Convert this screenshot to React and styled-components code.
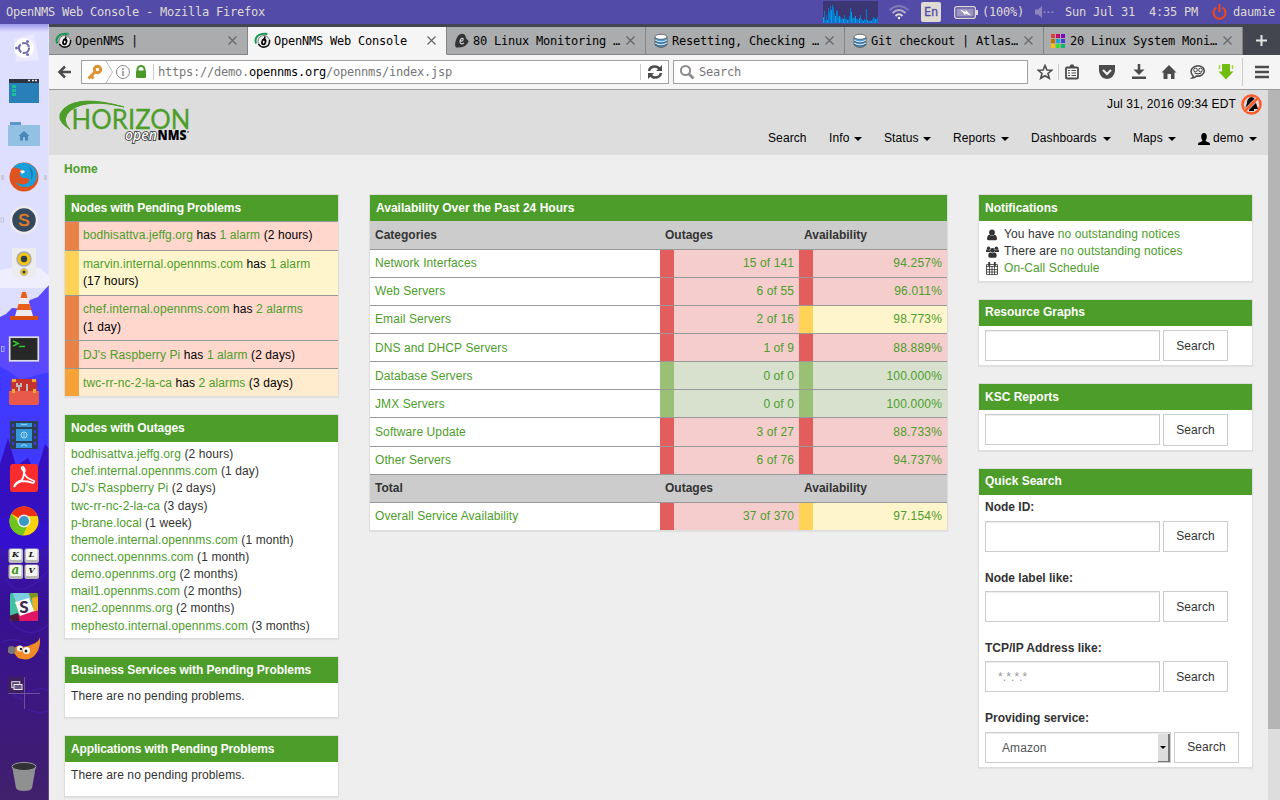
import React from "react";
import styled, { createGlobalStyle, css } from "styled-components";

const GREEN = "#4c9d29";
const RED = ["#e35d5c", "#f5cdcd"];
const YELLOW = ["#ffd357", "#fff5cd"];
const OK = ["#99c074", "#d7e1cd"];
const MINOR = ["#ea8147", "#ffd7cd"];
const WARN = ["#f5a338", "#ffebcd"];

const Global = createGlobalStyle`
  * { box-sizing: border-box; }
  body { margin: 0; overflow: hidden; }
  svg { display: block; flex: none; }
`;

const mono = css`
  font-family: "DejaVu Sans Mono", monospace;
  font-size: 12px;
  letter-spacing: -0.224px;
  white-space: pre;
`;

const Desktop = styled.div`
  width: 1280px;
  height: 800px;
  display: flex;
  flex-direction: column;
  overflow: hidden;
  background: #eee;
`;
const Panel = styled.div`
  ${mono}
  height: 24px;
  flex: none;
  display: flex;
  align-items: center;
  background: #534ba8;
  color: #dfdbd2;
  padding: 0 0 0 6px;
`;
const PanelTitle = styled.div`
  width: 817px;
`;
const PanelItem = styled.div`
  width: ${(p) => p.$w}px;
  flex: none;
`;
const LangBox = styled.div`
  ${mono}
  width: 20px;
  height: 20px;
  margin-right: 13px;
  border-radius: 2px;
  background: #dfdbd2;
  color: #534ba8;
  line-height: 21px;
  text-align: center;
  -webkit-text-stroke: 0.3px #534ba8;
`;
const Body = styled.div`
  display: flex;
  flex: 1;
  min-height: 0;
`;

/* Launcher */
const Launcher = styled.div`
  width: 49px;
  flex: none;
  position: relative;
  display: flex;
  flex-direction: column;
  align-items: flex-start;
  padding-top: 2px;
  background: #dedeff;
`;
const Wallpaper = styled.svg`
  position: absolute;
  left: 0;
  top: 0;
`;
const Slot = styled.div`
  position: relative;
  width: 48px;
  height: 43.03px;
  margin-top: ${(p) => p.$gap || 0}px;
  display: flex;
  align-items: center;
  justify-content: center;
`;

/* Browser chrome */
const Browser = styled.div`
  flex: 1;
  display: flex;
  flex-direction: column;
  min-width: 0;
`;
const TabStrip = styled.div`
  height: 31px;
  flex: none;
  display: flex;
  padding-top: 3px;
  background: #44464f;
`;
const Tab = styled.div`
  ${mono}
  width: 199px;
  height: 28px;
  display: flex;
  align-items: center;
  padding: 0 10px 0 6px;
  color: #000;
  background: ${(p) => (p.$active ? "#f5f5f5" : "#abacae")};
  border-right: 1px solid #838486;
  border-bottom: 1px solid ${(p) => (p.$active ? "#f5f5f5" : "#838486")};
`;
const TabLabel = styled.div`
  flex: 1;
  padding-left: 3px;
`;
const NewTab = styled.div`
  width: 37px;
  display: flex;
  align-items: center;
  justify-content: center;
  padding-bottom: 2px;
`;
const Toolbar = styled.div`
  ${mono}
  height: 35px;
  flex: none;
  display: flex;
  align-items: center;
  background: #f5f5f5;
  border-bottom: 1px solid #9b9b9b;
  padding-left: 8px;
`;
const Field = styled.div`
  width: ${(p) => p.$w}px;
  height: 24px;
  margin-left: ${(p) => p.$gap}px;
  display: flex;
  align-items: center;
  background: #fff;
  border: 1px solid #a0a0a0;
  color: #777;
  b { font-weight: normal; color: #000; }
`;
const FieldText = styled.span`
  flex: 1;
  padding-left: ${(p) => p.$pad}px;
`;
const Divider = styled.i`
  width: 1px;
  height: ${(p) => p.$h}px;
  background: #ccc;
  margin-left: ${(p) => p.$gap || 0}px;
`;
const Tool = styled.span`
  margin-left: ${(p) => p.$gap}px;
`;

/* Web page */
const Viewport = styled.div`
  flex: 1;
  min-height: 0;
  display: flex;
`;
const Page = styled.div`
  flex: 1;
  background: #eee;
  color: #333;
  font: 12px/17.14px "Liberation Sans", Arial, sans-serif;
  letter-spacing: 0.1px;
  overflow: hidden;
`;
const Scrollbar = styled.div`
  width: 12px;
  background: #ddd;
`;
const Thumb = styled.div`
  height: 639px;
  background: #b5b5b5;
`;
const Header = styled.header`
  height: 65px;
  display: flex;
  justify-content: space-between;
  background: #ddd;
  color: #000;
  padding: 3px 6px 0 8px;
`;
const HeaderRight = styled.div`
  display: flex;
  flex-direction: column;
  align-items: flex-end;
`;
const Clock = styled.div`
  display: flex;
  align-items: center;
  gap: 5px;
  height: 23px;
  letter-spacing: 0.13px;
`;
const Nav = styled.nav`
  display: flex;
  gap: 22px;
  margin: 14px 5px 0 0;
`;
const NavItem = styled.div`
  width: ${(p) => p.$w}px;
  display: flex;
  align-items: center;
  justify-content: space-between;
  white-space: nowrap;
`;
const UserLabel = styled.span`
  display: flex;
  align-items: center;
  gap: 3px;
`;
const Caret = styled.i`
  border: 4px solid transparent;
  border-top-color: #000;
  border-bottom: 0;
`;
const Crumb = styled.div`
  height: 39px;
  padding: 6px 0 0 15px;
  font-weight: bold;
  color: ${GREEN};
`;
const Columns = styled.main`
  display: flex;
  gap: 30px;
  padding-left: 15px;
`;
const Column = styled.section`
  width: ${(p) => p.$w}px;
  flex: none;
`;
const Box = styled.div`
  height: ${(p) => p.$h}px;
  margin-bottom: 17px;
  background: #fff;
  border: 1px solid #ddd;
  box-shadow: 0 1px 1px rgba(0, 0, 0, 0.05);
`;
const BoxTitle = styled.h3`
  margin: 0;
  height: ${(p) => p.$h || 26}px;
  padding: 0 6px;
  font-size: 12px;
  line-height: ${(p) => p.$line || 26}px;
  letter-spacing: ${(p) => p.$track || 0}px;
  color: #fff;
  background: ${GREEN};
`;
const BoxBody = styled.div`
  padding: ${(p) => p.$top ?? 5}px 6px 0;
`;
const Link = styled.a`
  color: ${GREEN};
`;
const Age = styled.span`
  white-space: nowrap;
`;
const AlarmRow = styled.div`
  height: ${(p) => p.$h}px;
  border-top: 1px solid #999;
  background: linear-gradient(to right, ${(p) => p.$tone[0]} 14px, ${(p) => p.$tone[1]} 14px);
  color: #000;
  padding: ${(p) => p.$top || 5}px 20px 0 18px;
`;
const GridRow = styled.div`
  display: grid;
  grid-template-columns: 290px 139px 148px;
  grid-template-rows: 100%;
  height: ${(p) => p.$h || 28}px;
  line-height: 27px;
  ${(p) => (p.$head ? "background: #ccc; font-weight: bold; letter-spacing: 0;" : "")}
  border-top: ${(p) => (p.$first ? 0 : 1)}px solid #999;
`;
const Cell = styled.div`
  padding: ${(p) => p.$drop || 0}px 5px 0;
  white-space: nowrap;
`;
const ToneCell = styled(Cell)`
  text-align: right;
  color: ${GREEN};
  letter-spacing: ${(p) => p.$track}px;
  background: linear-gradient(to right, ${(p) => p.$tone[0]} 14px, ${(p) => p.$tone[1]} 14px);
`;
const Notice = styled.div`
  display: flex;
  align-items: center;
  height: 17.14px;
`;
const NoticeIcon = styled.span`
  width: 19px;
  padding-left: 1px;
`;
const FormRow = styled.div`
  display: flex;
  gap: 3px;
`;
const Label = styled.label`
  display: block;
  height: ${(p) => p.$h || 26}px;
  padding-top: 4px;
  margin-top: ${(p) => p.$gap || 0}px;
  font-weight: bold;
  letter-spacing: 0;
`;
const Input = styled.div`
  width: 175px;
  height: 31px;
  padding-left: 12px;
  line-height: 31px;
  border: 1px solid #ccc;
  box-shadow: inset 0 1px 1px rgba(0, 0, 0, 0.075);
  color: #999;
`;
const Select = styled(Input)`
  width: 186px;
  display: flex;
  justify-content: space-between;
  padding: 1px 0 0 16px;
  line-height: 29px;
  color: #555;
`;
const SelectButton = styled.span`
  width: 12px;
  display: flex;
  align-items: center;
  justify-content: center;
  background: #ddd;
  border-right: 2px solid #777;
  border-bottom: 1px solid #777;
`;
const SelectCaret = styled.i`
  border: 3px solid transparent;
  border-top-color: #000;
  border-bottom: 0;
`;
const Button = styled.div`
  width: 65px;
  height: ${(p) => p.$h || 31}px;
  line-height: ${(p) => p.$line || 30}px;
  text-align: center;
  border: 1px solid #ccc;
  color: #333;
`;

/* Drawings */
const OpenNmsIcon = () => (
  <svg width="17" height="17" viewBox="0 0 17 17">
    <circle cx="9.800" cy="9.300" r="5.800" fill="#eee" stroke="#777" strokeWidth="1" />
    <path d="M15.600 8Q16 15 9.500 15.300Q6 15 4.500 12" fill="none" stroke="#111" strokeWidth="1.500" />
    <ellipse cx="9.800" cy="9.800" rx="1.700" ry="2.600" fill="#fff" stroke="#000" strokeWidth="1.700" transform="rotate(15 9.800 9.800)" />
    <path d="M11 4.500L10 9" stroke="#000" strokeWidth="1.500" />
    <path d="M2.200 11.500Q0 6.500 4.500 3.200Q8.500 1 13.500 2" fill="none" stroke="#12994f" strokeWidth="1.900" />
  </svg>
);
const EIcon = () => (
  <svg width="17" height="16" viewBox="0 0 17 16">
    <path d="M8 1Q12 0 13 5L15.500 8Q15.500 10 12 13Q8 15 3 14.500Q1 12 3 7Q5 1 8 1Z" fill="#333" />
    <path d="M6.500 8.500Q11 8 10 5.500Q7.500 4.500 7 9Q7.500 12 11 10" fill="none" stroke="#ccc" strokeWidth="1.200" />
  </svg>
);
const DbIcon = () => (
  <svg width="17" height="16" viewBox="-1 0 17 16">
    <path d="M2 4V12Q8 17 14 12V4Z" fill="#4a9fd8" stroke="#555" strokeWidth=".8" />
    <path d="M2 7Q8 11 14 7M2 10Q8 14 14 10" fill="none" stroke="#e8f3fa" strokeWidth="1" />
    <path d="M2 8Q8 12 14 8M2 11Q8 15 14 11" fill="none" stroke="#444" strokeWidth=".7" />
    <ellipse cx="8" cy="3.800" rx="6" ry="2.500" fill="#fff" stroke="#555" strokeWidth=".8" />
  </svg>
);
const MosaicIcon = () => {
  const c = ["#e0403a", "#c00b70", "#7a0bc0", "#c87000", "#1ba4d8", "#4040e0", "#ffc000", "#3ddc3d", "#0bb86a"];
  return (
    <svg width="17" height="16" viewBox="0 0 17 16">
      {c.map((f, i) => <rect key={f} x={1 + (i % 3) * 5} y={1 + Math.floor(i / 3) * 5} width="4" height="4" fill={f} />)}
    </svg>
  );
};
const CloseIcon = () => (
  <svg width="9" height="9" viewBox="0 0 9 9"><path d="M.5.5L8.500 8.500M8.500.5L.5 8.500" stroke="#666" strokeWidth="1.200" /></svg>
);

const graphBars = [6, 12, 3, 8, 3, 15, 11, 17, 13, 18, 16, 10, 7, 13, 12, 6, 7, 6, 4, 5, 4, 8, 5, 4, 3, 3, 7, 15, 11, 5, 6, 5, 7, 4, 4, 3, 5, 8, 4, 3, 2, 4, 3, 14, 3, 2, 2, 3, 2, 4, 6, 5, 4, 4, 6];

const SystemPanel = () => (
  <Panel>
    <PanelTitle>OpenNMS Web Console - Mozilla Firefox</PanelTitle>
    <PanelItem $w={65}>
      <svg width="55" height="22" viewBox="0 0 55 22">
        <rect width="55" height="22" fill="#3c3674" />
        {graphBars.map((h, i) => <rect key={i} x={i} y={22 - h} width="1" height={h} fill={i % 4 ? "#0878c8" : "#0b9cf0"} />)}
      </svg>
    </PanelItem>
    <PanelItem $w={33}>
      <svg width="22" height="16" viewBox="0 0 22 16" fill="none" strokeWidth="2">
        <path d="M1.500 6Q11-2 20.500 6" stroke="#7f79b9" />
        <path d="M4.500 9Q11 3 17.500 9" stroke="#b3afc8" />
        <path d="M7.500 12Q11 8.500 14.500 12" stroke="#dfdbd2" />
        <circle cx="11" cy="14" r="1.200" fill="#fff" stroke="none" />
      </svg>
    </PanelItem>
    <LangBox>En</LangBox>
    <PanelItem $w={28}>
      <svg width="24" height="13" viewBox="0 0 24 13">
        <rect x=".7" y=".7" width="20.600" height="11.600" rx="2" fill="none" stroke="#dfdbd2" strokeWidth="1.300" />
        <rect x="2.500" y="2.500" width="17" height="8" fill="#9b95bd" />
        <rect x="22" y="4" width="2" height="5" fill="#dfdbd2" />
        <path d="M6 3.500L12 6L11.500 3.500L17 9.500L11 7.500L11.500 9.500Z" fill="#fff" />
      </svg>
    </PanelItem>
    <PanelItem $w={53}>(100%)</PanelItem>
    <PanelItem $w={30}>
      <svg width="19" height="12" viewBox="0 0 19 12" fill="#8d87bd">
        <path d="M0 3.500H3L7 0V12L3 8.500H0Z" /><path d="M8.500 5.500h2v1.500h-2zM12.500 5.500h2v1.500h-2zM16.500 5.500h2v1.500h-2z" />
      </svg>
    </PanelItem>
    <PanelItem $w={147}>Sun Jul 31  4:35 PM</PanelItem>
    <PanelItem $w={21}>
      <svg width="15" height="16" viewBox="0 0 15 16" fill="none" stroke="#f0471c" strokeWidth="2">
        <path d="M4.500 3.500A6 6 0 1 0 10.500 3.500" /><path d="M7.500 0V8" />
      </svg>
    </PanelItem>
    <span>daumie</span>
  </Panel>
);

const I = ({ w = 32, h = 32, children }) => <svg width={w} height={h} viewBox={`0 0 ${w} ${h}`}>{children}</svg>;

const LauncherBar = () => (
  <Launcher>
    <Wallpaper width="49" height="776" viewBox="0 0 49 776">
      <defs>
        <linearGradient id="night" x1="0" y1="0" x2="0" y2="1">
          <stop offset="0" stopColor="#3a16bd" /><stop offset=".3" stopColor="#371093" /><stop offset="1" stopColor="#41206c" />
        </linearGradient>
        <linearGradient id="shade" x1="0" y1="0" x2="0" y2="1">
          <stop offset="0" stopColor="#9c98ec" /><stop offset="1" stopColor="#dedeff" />
        </linearGradient>
      </defs>
      <rect width="49" height="8" fill="url(#shade)" />
      <path d="M0 246Q20 241 40 244L49 252V264H0Z" fill="#f5f5ff" opacity=".7" />
      <path d="M49 261L38 273L30 276L24 285L12 284L6 290L0 293V380H49Z" fill="#5a49ff" />
      <path d="M0 343Q12 348 20 356L49 348V520H0Z" fill="#4039ff" />
      <path d="M0 440L8 414L16 442L28 434L36 450L45 420L49 425V776H0Z" fill="#3510c0" />
      <path d="M0 500Q20 510 49 520V776H0Z" fill="url(#night)" />
      <path d="M0 523Q28 538 49 520V500L0 492Z" fill="#3410ce" />
      <path d="M6 555Q20 580 49 545M10 598Q30 618 49 600M2 618Q20 610 44 630M27 668l15-4 7 3M14 672l7-5v8zM28 686l12 3 9-2" fill="none" stroke="#4522b8" strokeWidth="1.500" opacity=".5" />
      <path d="M48.500 0V776" stroke="#fff" opacity=".2" />
    </Wallpaper>
    <Slot>
      <I>
        <path d="M6 7L26 2L31 28L8 30Z" fill="#eae9ff" /><circle cx="16" cy="16" r="10" fill="#fff" />
        <circle cx="16" cy="16" r="5" fill="none" stroke="#716dab" strokeWidth="2.200" strokeDasharray="9 1.470" />
        <circle cx="8.500" cy="16" r="1.500" fill="#716dab" /><circle cx="19.500" cy="9.500" r="1.500" fill="#716dab" /><circle cx="19.500" cy="22.500" r="1.500" fill="#716dab" />
      </I>
    </Slot>
    <Slot>
      <I w={30} h={24}><rect width="30" height="24" fill="#2980b9" /><rect width="30" height="4" fill="#2c3540" /><path d="M19 1.500h2M23 1.500h2M26 1.500h2" stroke="#eee" strokeWidth="1.500" /><path d="M3 6h4v3H3zM3 10h4v3H3zM3 14h4v3H3z" fill="#1abc9c" /></I>
    </Slot>
    <Slot>
      <I w={32} h={24}><path d="M2 0H13V4H2Z" fill="#5a96c8" /><rect x="0" y="3" width="32" height="21" rx="1" fill="#93c1e4" /><path d="M10.500 14L16 9L21.500 14H20V18.500H17V15H15V18.500H12V14Z" fill="#4a86b8" /></I>
    </Slot>
    <Slot>
      <svg width="48" height="32" viewBox="0 0 48 32">
        <path d="M1 14h3v5H1zM44 14h3v5h-3z" fill="#c9c9d8" />
        <circle cx="24" cy="16" r="14.500" fill="#e0531f" />
        <path d="M14 5Q24-2 34 6Q39 12 36 19Q34 26 26 26Q17 27 14 17Q13 12 17 12Z" fill="#1aa0dc" />
        <path d="M11 9Q14 5 15 7Q20 7 23 10Q18 12 20 15Q23 18 28 17Q31 20 26 23Q18 25 12 17Z" fill="#e0531f" />
        <path d="M20 10Q24 8 25 11L22 13Z" fill="#fff" /><path d="M28 5Q36 10 31 20Q32 10 28 5Z" fill="#1779b5" />
      </svg>
    </Slot>
    <Slot>
      <svg width="48" height="32" viewBox="0 0 48 32"><rect x="1" y="14" width="2.500" height="4" fill="none" stroke="#c4c4e4" /><circle cx="24" cy="16" r="13" fill="#34495e" stroke="#ececf0" strokeWidth="2.500" /><text x="24" y="22" textAnchor="middle" fontFamily="Liberation Sans" fontSize="17" fill="#e67e22" stroke="#e67e22" strokeWidth=".5">S</text></svg>
    </Slot>
    <Slot>
      <I><rect x="4" y="1" width="24" height="29" fill="#ececf0" /><circle cx="16" cy="12" r="7" fill="#f1c40f" stroke="#aaa" strokeWidth="1.500" /><circle cx="16" cy="12" r="3.200" fill="#2c3e50" /><circle cx="16" cy="25" r="3.500" fill="#f1c40f" stroke="#bbb" /><circle cx="16" cy="25" r="1.500" fill="#2c3e50" /></I>
    </Slot>
    <Slot>
      <I><path d="M14 2H18L25 26H7Z" fill="#ececec" /><path d="M14 2h4l1.500 6h-7zM10.500 14h11l2 6H8.700z" fill="#e8601c" /><rect x="2" y="26" width="28" height="4" fill="#d8500f" /></I>
    </Slot>
    <Slot>
      <svg width="48" height="32" viewBox="0 0 48 32"><rect x="1.500" y="13.500" width="2.500" height="5" fill="none" stroke="#a7a1ff" /><rect x="9.700" y="4.200" width="28.600" height="23.600" fill="#262827" stroke="#dcdce4" strokeWidth="1.700" /><path d="M13 8l5 2.500-5 2.500M19 13.500h6" fill="none" stroke="#2fc532" strokeWidth="1.700" /></svg>
    </Slot>
    <Slot>
      <I><rect x="3" y="3" width="26" height="15" rx="1.500" fill="#c5312b" /><path d="M4 3h4v3H4zM24 3h4v3h-4z" fill="#eba93b" /><path d="M9 7v3h4V7M11 10v5M19 8v7" fill="none" stroke="#bbb" strokeWidth="2" /><path d="M1 15H31V27Q31 29 29 29H3Q1 29 1 27Z" fill="#e9594a" /><path d="M4 13h3v4H4zM25 13h3v4h-3z" fill="#eba93b" /></I>
    </Slot>
    <Slot>
      <I><rect x="2" y="2" width="28" height="28" fill="#2c3e50" /><path d="M8 4h16v4H8zM8 10h16v12H8zM8 24h16v5H8z" fill="#3498db" /><path d="M4 5h2v3H4zM4 11h2v3H4zM4 17h2v3H4zM4 23h2v3H4zM26 5h2v3h-2zM26 11h2v3h-2zM26 17h2v3h-2zM26 23h2v3h-2z" fill="#4039e0" /><circle cx="16" cy="16" r="3" fill="none" stroke="#a9d4f0" /><path d="M16 13.500v5M13 5q3 2 6 0M13 27q3-3 6 0" fill="none" stroke="#a9d4f0" /></I>
    </Slot>
    <Slot>
      <I><rect x="2" y="2" width="28" height="28" rx="3" fill="#fa2c2e" /><path d="M6 25Q7 20 14 18Q18 10 14 7Q13 5 15 5Q18 8 16 11Q18 16 24 18Q28 19 25 21Q20 19 14 19Q9 20 6 25Z" fill="none" stroke="#fff" strokeWidth="1.800" /></I>
    </Slot>
    <Slot>
      <I><circle cx="16" cy="16" r="14.500" fill="#fbd308" /><path d="M16 16L3.400 8.800A14.500 14.500 0 0 1 29.600 11H16Z" fill="#ed2d15" /><path d="M3.400 8.800A14.500 14.500 0 0 0 15 30.500L20 19L11.500 18.500Z" fill="#6dc41c" /><circle cx="16" cy="16" r="6.500" fill="#eee" /><circle cx="16" cy="16" r="5" fill="#3a9ac5" /></I>
    </Slot>
    <Slot>
      <I>
        {[["K", 0, 0, "#111"], ["L", 16, 0, "#111"], ["a", 0, 16, "#399714"], ["V", 16, 16, "#111"]].map(([t, x, y, c]) => (
          <g key={t}><rect x={x + 0.5} y={y + 0.5} width="14.500" height="14.500" rx="2" fill="#babab4" /><rect x={x + 2} y={y + 1} width="11.500" height="11" rx="1.500" fill="#f4f4f0" /><text x={x + 7.5} y={y + (t === "a" ? 10 : 9)} textAnchor="middle" fontFamily="DejaVu Serif" fontWeight="bold" fontStyle="italic" fontSize={t === "a" ? 12 : 8} fill={c}>{t}</text></g>
        ))}
      </I>
    </Slot>
    <Slot>
      <I><clipPath id="slack"><rect x="2" y="2" width="28" height="28" rx="2" /></clipPath><g clipPath="url(#slack)"><rect width="32" height="32" fill="#45c09f" /><path d="M4 0H21L24 8L8 11Z" fill="#79cfe0" /><path d="M20 0H32V8L23 9Z" fill="#7d9722" /><path d="M24 7L32 5V20L25 21Z" fill="#ebb021" /><path d="M23 21L32 19V32H11L9 24Z" fill="#e01563" /><path d="M0 25L10 22L12 32H0Z" fill="#4b1a3a" /></g><path d="M7 11L21 7L26 20L12 25Z" fill="#fff" /><text x="16" y="22" textAnchor="middle" fontFamily="Lato" fontWeight="900" fontSize="17" fill="#3d294d">S</text></I>
    </Slot>
    <Slot>
      <I><path d="M4 17Q10 9 14 13Q20 13 25 10Q31 8 32 3Q33 14 27 21Q21 28 10 24L6 19Z" fill="#f28a25" /><circle cx="3.500" cy="16" r="4" fill="#77797b" /><circle cx="12" cy="14.500" r="3" fill="#fff" /><circle cx="18.500" cy="16.500" r="3.500" fill="#fff" /><circle cx="13" cy="15" r="1.300" fill="#222" /><circle cx="18" cy="17" r="1.500" fill="#222" /></I>
    </Slot>
    <Slot>
      <I><rect x="0" y="0" width="16" height="16" fill="#3d1f60" /><path d="M16.500 0V32M0 16.500H32" stroke="#6f4fa3" /><rect x="3.700" y="4.700" width="8" height="6" fill="#514176" stroke="#ddd" /><rect x="6" y="7.500" width="8" height="5" fill="#655589" stroke="#eee" /></I>
    </Slot>
    <Slot $gap={40}>
      <I><path d="M4 6L8 28Q9 31 16 31Q23 31 24 28L28 6Z" fill="#8f9092" /><ellipse cx="16" cy="6.500" rx="12" ry="4" fill="#303235" stroke="#999" /></I>
    </Slot>
  </Launcher>
);

const tabs = [
  ["OpenNMS |", OpenNmsIcon],
  ["OpenNMS Web Console", OpenNmsIcon],
  ["80 Linux Monitoring …", EIcon],
  ["Resetting, Checking …", DbIcon],
  ["Git checkout | Atlas…", DbIcon],
  ["20 Linux System Moni…", MosaicIcon],
];

const T = ({ gap, children }) => <Tool $gap={gap}><svg width="16" height="16" viewBox="0 0 16 16">{children}</svg></Tool>;
const D = "#4c4c4c";

const Chrome = () => (
  <>
    <TabStrip>
      {tabs.map(([t, Icon], i) => <Tab key={t} $active={i === 1}><Icon /><TabLabel>{t}</TabLabel><CloseIcon /></Tab>)}
      <NewTab><svg width="11" height="11" viewBox="0 0 11 11"><path d="M5.500 0V11M0 5.500H11" stroke="#e4e4e4" strokeWidth="2" /></svg></NewTab>
    </TabStrip>
    <Toolbar>
      <svg width="16" height="16" viewBox="0 0 16 16" fill="none" stroke={D} strokeWidth="2.600"><path d="M8 2.500L2.500 8L8 13.500M2.500 8H14" /></svg>
      <Field $w={588} $gap={8}>
        <svg width="72" height="22" viewBox="0 0 72 22">
          <g fill="none" stroke="#dd9330"><circle cx="15.500" cy="8.500" r="3.200" strokeWidth="3" /><path d="M13 11L6.500 17.500M9 15l2.500 2.500" strokeWidth="3" /></g>
          <path d="M24 0L30.500 11L24 22" fill="none" stroke="#bbb" />
          <circle cx="41" cy="11" r="6.500" fill="none" stroke="#888" /><path d="M41 7v2M41 10v5" stroke="#888" strokeWidth="1.500" />
          <path d="M55.500 10V8.500a3.500 3.500 0 0 1 7 0V10" fill="none" stroke="#4b9a26" strokeWidth="2" /><rect x="54" y="9.500" width="10" height="7.500" rx="1" fill="#4b9a26" />
          <path d="M71.500 3V19" stroke="#ccc" />
        </svg>
        <FieldText $pad={4}>https://demo.<b>opennms.org</b>/opennms/index.jsp</FieldText>
        <Divider $h={16} />
        <Tool $gap={6}>
          <svg width="16" height="16" viewBox="0 0 16 16"><path d="M2 7Q3 2.500 8 2.500Q11 2.500 12.500 5M14 9Q13 13.500 8 13.500Q5 13.500 3.500 11" fill="none" stroke={D} strokeWidth="2.500" /><path d="M15 1V7H9ZM1 15V9H7Z" fill={D} /></svg>
        </Tool>
        <Divider $h={0} $gap={4} />
      </Field>
      <Field $w={355} $gap={4}>
        <Tool $gap={5}><svg width="16" height="16" viewBox="0 0 16 16" fill="none" stroke="#8c8c8c"><circle cx="6.500" cy="6.500" r="4.600" strokeWidth="2" /><path d="M10 10L14.500 14.500" strokeWidth="2.800" /></svg></Tool>
        <FieldText $pad={4}>Search</FieldText>
      </Field>
      <T gap={9}><path d="M8 1.500L9.900 6L14.800 6.300L11 9.500L12.300 14.300L8 11.700L3.700 14.300L5 9.500L1.200 6.300L6.100 6Z" fill="none" stroke={D} strokeWidth="1.600" /></T>
      <Divider $h={16} $gap={5} />
      <T gap={5}><rect x="2" y="3.500" width="12" height="11" rx="1" fill="none" stroke={D} strokeWidth="1.800" /><path d="M5 4L6.500.5h3L11 4Z" fill={D} /><path d="M4 6.500h2M7.500 6.500H12M4 9h2M7.500 9H12M4 11.500h2M7.500 11.500H12" stroke={D} strokeWidth="1.200" /></T>
      <T gap={19}><path d="M0 1H16V7Q15 14 8 15Q1 14 0 7Z" fill={D} /><path d="M4 6L8 10L12 6" fill="none" stroke="#f5f5f5" strokeWidth="2" /></T>
      <T gap={16}><path d="M8 0V6M1 13.800H15" stroke={D} strokeWidth="2.500" /><path d="M2.500 5.500H13.500L8 11Z" fill={D} /></T>
      <T gap={14}><path d="M8 1L15.500 8.500H13.500V15H10V10H6.500V15H2.500V8.500H.5Z" fill={D} /></T>
      <T gap={13}><path d="M3 12Q-1 7 3 3.500Q8 0 13 3.500Q16 8 12 11Q9 12.500 6.500 12Q5 14 2 14Q3.500 13 3 12Z" fill="#eee" stroke={D} strokeWidth="1.500" /><circle cx="5.500" cy="6" r="1.800" fill="#fff" stroke="#333" strokeWidth=".9" /><circle cx="10.500" cy="6" r="1.800" fill="#fff" stroke="#333" strokeWidth=".9" /><path d="M4.500 9Q8 11 11.500 8.800" fill="none" stroke="#333" /></T>
      <T gap={12}><path d="M4 0h8v7.500H15.500L8 15.500L.5 7.500H4Z" fill="#72bd11" /><path d="M1.500 1v4M14.500 1v4" stroke="#9ade38" strokeWidth="1.500" /></T>
      <Divider $h={28} $gap={8} />
      <T gap={11}><path d="M1 3H15M1 8H15M1 13H15" stroke={D} strokeWidth="2.500" /></T>
    </Toolbar>
  </>
);

const Logo = () => (
  <svg width="136" height="55" viewBox="0 0 136 55">
    <path d="M13 36.500Q-4 26 7 15.500Q23 1.500 67 14Q31 5 14 17Q3 26 13 36.500Z" fill="#4c9d29" stroke="#4c9d29" />
    <text x="14.500" y="36" textLength="119" lengthAdjust="spacingAndGlyphs" fontFamily="Lato" fontSize="26" fill="#4c9d29" stroke="#4c9d29" strokeWidth=".3">HORIZON</text>
    <text x="68" y="47" textLength="32" fontFamily="Open Sans" fontStyle="italic" fontWeight="600" fontSize="14" fill="#fff" stroke="#222" strokeWidth="1.500" paintOrder="stroke" lengthAdjust="spacingAndGlyphs">open</text>
    <text x="100.500" y="47" textLength="29" fontFamily="Open Sans" fontWeight="800" fontSize="13.500" fill="#000" lengthAdjust="spacingAndGlyphs">NMS</text>
    <circle cx="131" cy="39" r=".8" fill="#222" />
  </svg>
);
const BellOff = () => (
  <svg width="21" height="21" viewBox="0 0 21 21">
    <path d="M10.500 3Q15 4 15 9L17 15H4L6 9Q6 4 10.500 3ZM8 15h5v2H8z" fill="#000" /><circle cx="10.500" cy="10.500" r="9" fill="none" stroke="#fb5b2d" strokeWidth="2.600" /><path d="M16.500 4.500L4.500 16.500" stroke="#fff" strokeWidth="4" opacity=".7" /><path d="M17 4L4 17" stroke="#fb5b2d" strokeWidth="2.500" />
  </svg>
);
const PersonIcon = () => (
  <svg width="12" height="12" viewBox="0 0 12 12"><path d="M3.200 3.500Q3.200 0 6 0T8.800 3.500Q8.800 6 7.600 7.300L7.800 8.300L11.500 9.800Q12 10.500 12 12H0Q0 10.500 .5 9.800L4.200 8.300L4.400 7.300Q3.200 6 3.200 3.500Z" /></svg>
);
const NoticeUser = () => (
  <svg width="12" height="12" viewBox="0 0 12 12" fill="#333"><circle cx="6" cy="3.500" r="2.900" /><path d="M3.500 5.700Q6 8 8.500 5.700Q11 6.300 11 10Q10.800 11.300 9.500 11.300H2.500Q1.200 11.300 1 10Q1 6.300 3.500 5.700Z" /></svg>
);
const NoticeGroup = () => (
  <svg width="13" height="12" viewBox="0 0 13 12" fill="#333">
    <circle cx="2.600" cy="2.300" r="1.700" /><circle cx="10.400" cy="2.300" r="1.700" /><path d="M0 6V5Q0 3.300 1 3.300Q2.500 4.500 3.800 4Q3.800 5.300 4.400 6ZM13 6V5Q13 3.300 12 3.300Q10.500 4.500 9.200 4Q9.200 5.300 8.600 6Z" />
    <circle cx="6.500" cy="4.300" r="2.400" /><path d="M4.300 6.300Q6.500 8 8.700 6.300Q10.700 6.700 10.700 10Q10.500 11.700 9.300 11.700H3.700Q2.500 11.700 2.300 10Q2.300 6.700 4.300 6.300Z" />
  </svg>
);
const CalendarIcon = () => (
  <svg width="12" height="13" viewBox="0 0 12 13" fill="none" stroke="#333"><path d="M.5 2.500H11.500V12.500H.5ZM0 4.500H12M0 7.500H12M0 10H12M3.500 4V12.500M6 4V12.500M8.500 4V12.500" strokeWidth=".8" /><path d="M3.200 0V4M8.800 0V4" strokeWidth="1.800" /></svg>
);

const menus = [["Info", 33], ["Status", 47], ["Reports", 56], ["Dashboards", 80], ["Maps", 43]];
const alarms = [
  ["bodhisattva.jeffg.org", "1 alarm", "(2 hours)", MINOR, 29],
  ["marvin.internal.opennms.com", "1 alarm", "(17 hours)", YELLOW, 45],
  ["chef.internal.opennms.com", "2 alarms", "(1 day)", MINOR, 45, 5.4],
  ["DJ's Raspberry Pi", "1 alarm", "(2 days)", MINOR, 28, 6],
  ["twc-rr-nc-2-la-ca", "2 alarms", "(3 days)", WARN, 28, 6],
];
const outages = [
  ["bodhisattva.jeffg.org", "2 hours"], ["chef.internal.opennms.com", "1 day"], ["DJ's Raspberry Pi", "2 days"],
  ["twc-rr-nc-2-la-ca", "3 days"], ["p-brane.local", "1 week"], ["themole.internal.opennms.com", "1 month"],
  ["connect.opennms.com", "1 month"], ["demo.opennms.org", "2 months"], ["mail1.opennms.com", "2 months"],
  ["nen2.opennms.org", "2 months"], ["mephesto.internal.opennms.com", "3 months"],
];
const services = [
  { name: "Network Interfaces", out: "15 of 141", avail: "94.257%", a: RED, b: RED },
  { name: "Web Servers", out: "6 of 55", avail: "96.011%", a: RED, b: RED },
  { name: "Email Servers", out: "2 of 16", avail: "98.773%", a: RED, b: YELLOW },
  { name: "DNS and DHCP Servers", out: "1 of 9", avail: "88.889%", a: RED, b: RED, drop: 1 },
  { name: "Database Servers", out: "0 of 0", avail: "100.000%", a: OK, b: OK, drop: 1 },
  { name: "JMX Servers", out: "0 of 0", avail: "100.000%", a: OK, b: OK, drop: 1 },
  { name: "Software Update", out: "3 of 27", avail: "88.733%", a: RED, b: RED, h: 29, drop: 1 },
  { name: "Other Servers", out: "6 of 76", avail: "94.737%", a: RED, b: RED },
];
const overall = { name: "Overall Service Availability", out: "37 of 370", avail: "97.154%", a: RED, b: YELLOW };

const Service = ({ row }) => (
  <GridRow $h={row.h}>
    <Cell $drop={row.drop}><Link>{row.name}</Link></Cell>
    <ToneCell $drop={row.drop} $tone={row.a} $track={0.1}>{row.out}</ToneCell>
    <ToneCell $drop={row.drop} $tone={row.b} $track={0.18}>{row.avail}</ToneCell>
  </GridRow>
);
const HeadRow = ({ name, first }) => (
  <GridRow $head $first={first}>
    <Cell $drop={first ? 1 : 0}>{name}</Cell><Cell $drop={first ? 1 : 0}>Outages</Cell><Cell $drop={first ? 1 : 0}>Availability</Cell>
  </GridRow>
);
const Search = ({ h, line, children }) => <FormRow>{children || <Input />}<Button $h={h} $line={line}>Search</Button></FormRow>;

export default function App() {
  return (
    <Desktop>
      <Global />
      <SystemPanel />
      <Body>
        <LauncherBar />
        <Browser>
          <Chrome />
          <Viewport>
            <Page>
              <Header>
                <Logo />
                <HeaderRight>
                  <Clock>Jul 31, 2016 09:34 EDT<BellOff /></Clock>
                  <Nav>
                    <NavItem $w={39}>Search</NavItem>
                    {menus.map(([t, w]) => <NavItem key={t} $w={w}>{t}<Caret /></NavItem>)}
                    <NavItem $w={59}><UserLabel><PersonIcon />demo</UserLabel><Caret /></NavItem>
                  </Nav>
                </HeaderRight>
              </Header>
              <Crumb>Home</Crumb>
              <Columns>
                <Column $w={275}>
                  <Box $h={203}>
                    <BoxTitle $track={-0.1}>Nodes with Pending Problems</BoxTitle>
                    {alarms.map(([n, a, t, tone, h, top]) => <AlarmRow key={n} $tone={tone} $h={h} $top={top}><Link>{n}</Link> has <Link>{a}</Link> <Age>{t}</Age></AlarmRow>)}
                  </Box>
                  <Box $h={225}>
                    <BoxTitle $h={27} $track={-0.1}>Nodes with Outages</BoxTitle>
                    <BoxBody $top={4.2}>{outages.map(([n, t]) => <div key={n}><Link>{n}</Link> ({t})</div>)}</BoxBody>
                  </Box>
                  <Box $h={62}>
                    <BoxTitle $track={-0.05}>Business Services with Pending Problems</BoxTitle>
                    <BoxBody>There are no pending problems.</BoxBody>
                  </Box>
                  <Box $h={62}>
                    <BoxTitle $track={-0.14}>Applications with Pending Problems</BoxTitle>
                    <BoxBody>There are no pending problems.</BoxBody>
                  </Box>
                </Column>
                <Column $w={579}>
                  <Box $h={337}>
                    <BoxTitle>Availability Over the Past 24 Hours</BoxTitle>
                    <HeadRow name="Categories" first />
                    {services.map((s) => <Service key={s.name} row={s} />)}
                    <HeadRow name="Total" />
                    <Service row={overall} />
                  </Box>
                </Column>
                <Column $w={275}>
                  <Box $h={88}>
                    <BoxTitle>Notifications</BoxTitle>
                    <BoxBody>
                      <Notice><NoticeIcon><NoticeUser /></NoticeIcon><span>You have <Link>no outstanding notices</Link></span></Notice>
                      <Notice><NoticeIcon><NoticeGroup /></NoticeIcon><span>There are <Link>no outstanding notices</Link></span></Notice>
                      <Notice><NoticeIcon><CalendarIcon /></NoticeIcon><Link>On-Call Schedule</Link></Notice>
                    </BoxBody>
                  </Box>
                  <Box $h={67}>
                    <BoxTitle $line={24}>Resource Graphs</BoxTitle>
                    <BoxBody $top={4}><Search /></BoxBody>
                  </Box>
                  <Box $h={68}>
                    <BoxTitle>KSC Reports</BoxTitle>
                    <BoxBody $top={4}><Search h={32} /></BoxBody>
                  </Box>
                  <Box $h={300}>
                    <BoxTitle $line={24}>Quick Search</BoxTitle>
                    <BoxBody $top={0}>
                      <Label>Node ID:</Label>
                      <Search line={28} />
                      <Label $gap={14} $h={25}>Node label like:</Label>
                      <Search />
                      <Label $gap={14} $h={25}>TCP/IP Address like:</Label>
                      <Search><Input>*.*.*.*</Input></Search>
                      <Label $gap={14}>Providing service:</Label>
                      <Search line={28}><Select>Amazon<SelectButton><SelectCaret /></SelectButton></Select></Search>
                    </BoxBody>
                  </Box>
                </Column>
              </Columns>
            </Page>
            <Scrollbar><Thumb /></Scrollbar>
          </Viewport>
        </Browser>
      </Body>
    </Desktop>
  );
}
